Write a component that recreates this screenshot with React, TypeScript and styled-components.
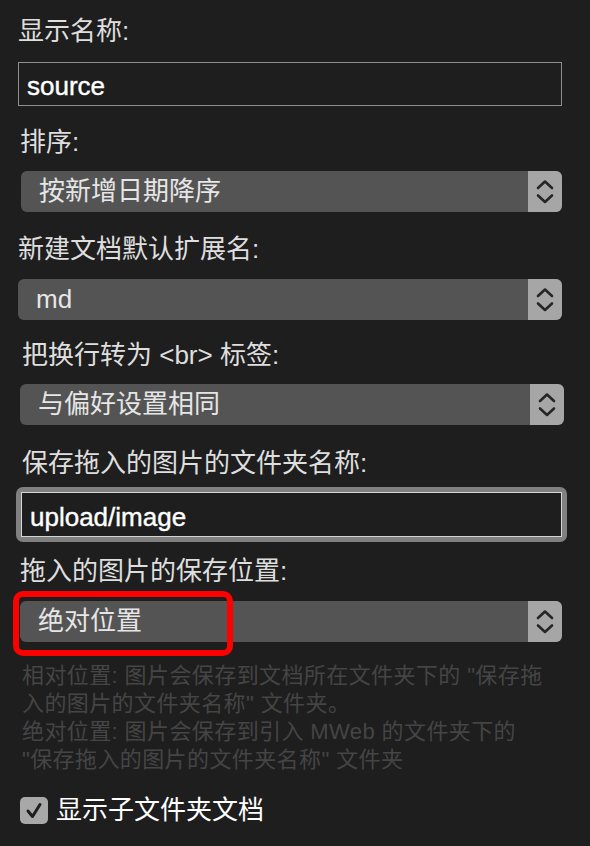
import React from "react";
import styled, { createGlobalStyle } from "styled-components";

const GlobalStyle = createGlobalStyle`
  html, body {
    margin: 0;
    padding: 0;
    background: #1e1e1e;
  }
  body {
    font-family: "Liberation Sans", "Noto Sans CJK SC", sans-serif;
  }
`;

const Panel = styled.div`
  width: 590px;
  min-height: 846px;
  box-sizing: border-box;
  padding-top: 16px;
  display: flex;
  flex-direction: column;
  background: #1e1e1e;
`;

const Label = styled.div<{ $indent: number; $mt: number }>`
  margin-left: ${(p) => p.$indent}px;
  margin-top: ${(p) => p.$mt}px;
  height: 30px;
  line-height: 30px;
  font-size: 26px;
  color: #dedede;
  white-space: nowrap;
`;

const TextField = styled.div<{ $mt: number }>`
  margin-left: 18px;
  margin-top: ${(p) => p.$mt}px;
  width: 544px;
  height: 44px;
  box-sizing: border-box;
  border: 1px solid #8e8e8e;
  padding: 5px 0 0 8px;
  display: flex;
  align-items: center;
  font-size: 26px;
  color: #ffffff;
  -webkit-text-stroke: 0.4px #ffffff;
`;

const FocusRing = styled.div<{ $mt: number }>`
  margin-left: 16px;
  margin-top: ${(p) => p.$mt}px;
  width: 551px;
  height: 55px;
  box-sizing: border-box;
  padding: 5px;
  border-radius: 7px;
  background: #808080;
  display: flex;
`;

const FocusedField = styled.div`
  flex: 1;
  box-sizing: border-box;
  border: 1px solid #d6d6d6;
  background: #1e1e1e;
  padding: 5px 0 0 8px;
  display: flex;
  align-items: center;
  font-size: 26px;
  color: #ffffff;
  -webkit-text-stroke: 0.4px #ffffff;
`;

const Select = styled.div<{ $left: number; $width: number; $mt: number }>`
  position: relative;
  margin-left: ${(p) => p.$left}px;
  margin-top: ${(p) => p.$mt}px;
  width: ${(p) => p.$width}px;
  height: 41px;
  display: flex;
`;

const SelectBody = styled.div`
  flex: 1;
  display: flex;
  border-radius: 6px;
  overflow: hidden;
  background: #545454;
`;

const SelectValue = styled.div`
  flex: 1;
  padding-left: 18px;
  line-height: 41px;
  font-size: 26px;
  color: #e6e6e6;
  white-space: nowrap;
`;

const Stepper = styled.div`
  width: 34px;
  background: #a6a6a6;
  display: flex;
`;

const Highlight = styled.div`
  position: absolute;
  left: -7px;
  top: -10px;
  width: 220px;
  height: 65px;
  box-sizing: border-box;
  border: 6px solid #fe0000;
  border-radius: 10px;
  pointer-events: none;
`;

const Help = styled.div`
  margin-left: 22px;
  margin-top: 20px;
  font-size: 22px;
  line-height: 28px;
  letter-spacing: 0.4px;
  color: #454545;
  white-space: nowrap;
`;

const CheckRow = styled.div`
  margin-left: 20px;
  margin-top: 21px;
  height: 30px;
  display: flex;
  align-items: center;
  gap: 8px;
`;

const CheckBox = styled.div`
  width: 28px;
  height: 27px;
  border-radius: 5px;
  background: #a8a8a8;
  display: flex;
`;

const CheckLabel = styled.span`
  font-size: 26px;
  line-height: 30px;
  color: #ffffff;
`;

const Chevrons = () => (
  <svg width="34" height="41" viewBox="0 0 34 41">
    <polyline
      points="10,17 17,10.5 24,17"
      fill="none"
      stroke="#262626"
      strokeWidth="2.6"
      strokeLinecap="round"
      strokeLinejoin="round"
    />
    <polyline
      points="10,24.5 17,31 24,24.5"
      fill="none"
      stroke="#262626"
      strokeWidth="2.6"
      strokeLinecap="round"
      strokeLinejoin="round"
    />
  </svg>
);

const PopUp = ({
  value,
  left,
  width,
  mt,
  highlighted,
}: {
  value: string;
  left: number;
  width: number;
  mt: number;
  highlighted?: boolean;
}) => (
  <Select $left={left} $width={width} $mt={mt}>
    <SelectBody>
      <SelectValue>{value}</SelectValue>
      <Stepper>
        <Chevrons />
      </Stepper>
    </SelectBody>
    {highlighted && <Highlight />}
  </Select>
);

export default function App() {
  return (
    <>
      <GlobalStyle />
      <Panel>
        <Label $indent={18} $mt={0}>显示名称:</Label>
        <TextField $mt={16}>source</TextField>

        <Label $indent={20} $mt={21}>排序:</Label>
        <PopUp value="按新增日期降序" left={21} width={541} mt={14} />

        <Label $indent={18} $mt={22}>新建文档默认扩展名:</Label>
        <PopUp value="md" left={18} width={544} mt={15} />

        <Label $indent={22} $mt={20}>把换行转为 &lt;br&gt; 标签:</Label>
        <PopUp value="与偏好设置相同" left={20} width={544} mt={14} />

        <Label $indent={22} $mt={23}>保存拖入的图片的文件夹名称:</Label>
        <FocusRing $mt={9}>
          <FocusedField>upload/image</FocusedField>
        </FocusRing>

        <Label $indent={20} $mt={14}>拖入的图片的保存位置:</Label>
        <PopUp value="绝对位置" left={20} width={542} mt={15} highlighted />

        <Help>
          相对位置: 图片会保存到文档所在文件夹下的 "保存拖
          <br />
          入的图片的文件夹名称" 文件夹。
          <br />
          绝对位置: 图片会保存到引入 MWeb 的文件夹下的
          <br />
          "保存拖入的图片的文件夹名称" 文件夹
        </Help>

        <CheckRow>
          <CheckBox>
            <svg width="28" height="27" viewBox="0 0 28 27">
              <polyline
                points="8,14 12.5,19.5 20,7.5"
                fill="none"
                stroke="#1e1e1e"
                strokeWidth="3"
                strokeLinecap="round"
                strokeLinejoin="round"
              />
            </svg>
          </CheckBox>
          <CheckLabel>显示子文件夹文档</CheckLabel>
        </CheckRow>
      </Panel>
    </>
  );
}
